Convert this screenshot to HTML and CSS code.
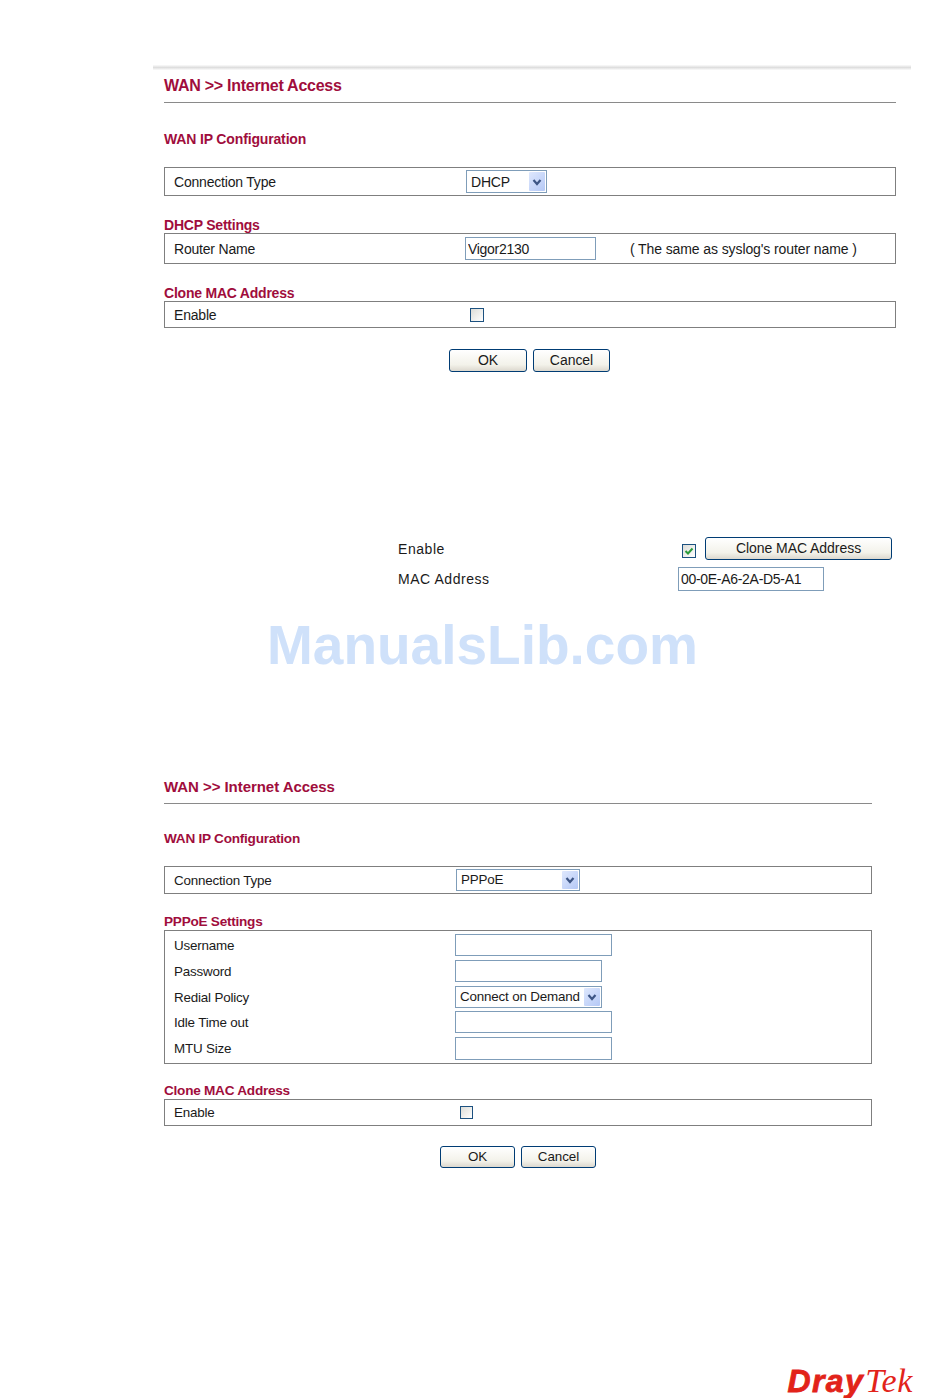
FILE: index.html
```html
<!DOCTYPE html>
<html lang="en">
<head>
<meta charset="utf-8">
<title>WAN Internet Access</title>
<link rel="stylesheet" href="styles.css">
</head>
<body>
<main class="page">
  <section class="panel panel-dhcp">
    <h1 class="title">WAN &gt;&gt; Internet Access</h1>
    <h2 class="heading heading-main">WAN IP Configuration</h2>
    <div class="box box-conn">
      <span class="label">Connection Type</span>
      <div class="select select-dhcp"><span class="select-value">DHCP</span><span class="arrow"><svg width="12" height="12" viewBox="0 0 12 12"><path d="M2.5 4 6 8l3.5-4" fill="none" stroke="#3d5585" stroke-width="2.2"/></svg></span></div>
    </div>
    <h2 class="heading heading-dhcp">DHCP Settings</h2>
    <div class="box box-router">
      <span class="label">Router Name</span>
      <input class="input input-router" type="text" value="Vigor2130">
      <span class="note">( The same as syslog's router name )</span>
    </div>
    <h2 class="heading heading-clone">Clone MAC Address</h2>
    <div class="box box-enable">
      <span class="label">Enable</span>
      <span class="check"></span>
    </div>
    <div class="actions">
      <button class="btn btn-ok" type="button">OK</button>
      <button class="btn btn-cancel" type="button">Cancel</button>
    </div>
  </section>

  <section class="clone">
    <div class="clone-row clone-row-top">
      <span class="clone-label">Enable</span>
      <span class="check check-on"><svg width="12" height="12" viewBox="0 0 12 12"><path d="M2.5 6 5 8.5 9.5 3.5" fill="none" stroke="#2a9a3a" stroke-width="2"/></svg></span>
      <button class="btn btn-clone" type="button">Clone MAC Address</button>
    </div>
    <div class="clone-row">
      <span class="clone-label">MAC Address</span>
      <input class="input input-mac" type="text" value="00-0E-A6-2A-D5-A1">
    </div>
  </section>

  <section class="panel panel-pppoe">
    <h1 class="title title-small">WAN &gt;&gt; Internet Access</h1>
    <h2 class="heading heading-main2">WAN IP Configuration</h2>
    <div class="box box-conn2">
      <span class="label">Connection Type</span>
      <div class="select select-pppoe"><span class="select-value">PPPoE</span><span class="arrow"><svg width="12" height="12" viewBox="0 0 12 12"><path d="M2.5 4 6 8l3.5-4" fill="none" stroke="#3d5585" stroke-width="2.2"/></svg></span></div>
    </div>
    <h2 class="heading heading-pppoe">PPPoE Settings</h2>
    <div class="box box-form">
      <div class="form-row"><span class="label">Username</span><input class="input input-wide" type="text"></div>
      <div class="form-row"><span class="label">Password</span><input class="input input-narrow" type="password"></div>
      <div class="form-row"><span class="label">Redial Policy</span><div class="select select-redial"><span class="select-value">Connect on Demand</span><span class="arrow"><svg width="12" height="12" viewBox="0 0 12 12"><path d="M2.5 4 6 8l3.5-4" fill="none" stroke="#3d5585" stroke-width="2.2"/></svg></span></div></div>
      <div class="form-row"><span class="label">Idle Time out</span><input class="input input-wide" type="text"></div>
      <div class="form-row"><span class="label">MTU Size</span><input class="input input-wide input-tall" type="text"></div>
    </div>
    <h2 class="heading heading-clone2">Clone MAC Address</h2>
    <div class="box box-enable2">
      <span class="label">Enable</span>
      <span class="check check-small"></span>
    </div>
    <div class="actions actions2">
      <button class="btn btn-ok2" type="button">OK</button>
      <button class="btn btn-ok2" type="button">Cancel</button>
    </div>
  </section>

  <footer class="brand"><span class="brand-dray">Dray</span><span class="brand-tek">Tek</span></footer>
  <div class="watermark">ManualsLib.com</div>
</main>
</body>
</html>
```

FILE: styles.css
```css
* { box-sizing: border-box; }
html, body { margin: 0; padding: 0; background: #fff; }
.page {
  position: relative;
  width: 950px;
  height: 1398px;
  overflow: hidden;
  font-family: "Liberation Sans", Arial, sans-serif;
  font-size: 14px;
  letter-spacing: -0.2px;
  color: #1a1a1a;
}
.panel-dhcp {
  margin: 65px 39px 0 153px;
  padding: 5px 15px 0 11px;
  height: 307px;
  background: linear-gradient(#fbfbfb, #dedede 50%, #fbfbfb) no-repeat top left / 100% 5px;
}
.title {
  margin: 0;
  height: 33px;
  padding-top: 7px;
  line-height: 18px;
  font-size: 16px;
  letter-spacing: -0.27px;
  font-weight: bold;
  color: #a00d3c;
  border-bottom: 1px solid #8a8a8a;
}
.heading {
  margin: 0;
  font-size: 14px;
  line-height: 16px;
  letter-spacing: -0.22px;
  font-weight: bold;
  color: #a00d3c;
}
.heading-main { margin-top: 28px; letter-spacing: -0.15px; }
.heading-dhcp { margin-top: 21px; }
.heading-clone { margin-top: 21px; }
.box {
  display: flex;
  align-items: center;
  border: 1px solid #7f7f7f;
  padding-left: 9px;
}
.label { line-height: 16px; }
.box .label { flex: none; width: 291px; }
.box-conn { margin-top: 20px; height: 29px; }
.box-router { margin-top: 0; height: 31px; }
.box-enable { height: 27px; }
.select {
  display: flex;
  align-items: center;
  justify-content: space-between;
  border: 1px solid #7f9db9;
  background: #fff;
  padding: 1px 1px 1px 4px;
}
.select-value { line-height: 16px; white-space: nowrap; }
.arrow {
  display: flex;
  align-items: center;
  justify-content: center;
  flex: none;
  width: 16px;
  height: 100%;
  background: linear-gradient(135deg, #dfe8fd, #b4c8f6);
  border-radius: 1px;
}
.select-dhcp { width: 81px; height: 23px; margin-left: 1px; }
.input {
  display: block;
  height: 23px;
  margin: 0;
  padding: 0 2px;
  border: 1px solid #7f9db9;
  background: #fff;
  color: #1a1a1a;
  font: 14px "Liberation Sans", Arial, sans-serif;
  letter-spacing: -0.3px;
  outline: none;
}
.input-router { width: 131px; flex: none; }
.note { margin-left: 34px; letter-spacing: -0.1px; }
.check {
  display: flex;
  align-items: center;
  justify-content: center;
  flex: none;
  width: 14px;
  height: 14px;
  border: 1px solid #1c5180;
  background: linear-gradient(135deg, #dcdcd7, #fff);
  margin-left: 5px;
}
.actions {
  display: flex;
  gap: 6px;
  margin: 21px 0 0 285px;
}
.btn {
  height: 23px;
  margin: 0;
  padding: 0 0 1px;
  border: 1px solid #003c74;
  border-radius: 3px;
  background: linear-gradient(#fff, #f3f2ea 70%, #dcd8ce);
  color: #1a1a1a;
  font: 14px "Liberation Sans", Arial, sans-serif;
  letter-spacing: -0.05px;
}
.btn-ok { width: 78px; }
.btn-cancel { width: 77px; }

.clone { margin: 165px 0 0 398px; width: 494px; }
.clone-row { display: flex; align-items: center; }
.clone-row-top { height: 23px; }
.clone-row + .clone-row { margin-top: 7px; height: 24px; }
.clone-label { width: 280px; letter-spacing: 0.55px; flex: none; }
.clone .check { margin-left: 4px; margin-top: 4px; }
.btn-clone { width: 187px; margin-left: 9px; }
.input-mac { width: 146px; height: 24px; }

.panel-pppoe { margin: 187px 78px 0 164px; font-size: 13.4px; letter-spacing: -0.18px; }
.title-small { height: 26px; padding-top: 1px; font-size: 15px; letter-spacing: -0.05px; line-height: 16px; }
.panel-pppoe .heading { font-size: 13.6px; letter-spacing: -0.25px; }
.panel-pppoe .input { font-size: 13.4px; letter-spacing: -0.18px; }
.box-conn2 .label, .box-form .label { padding-top: 2px; line-height: 16px; box-sizing: border-box; }
.heading-main2 { margin-top: 27px; }
.heading-pppoe { margin-top: 20px; }
.heading-clone2 { margin-top: 19px; }
.box-conn2 { margin-top: 19px; height: 28px; }
.box-conn2 .label, .box-enable2 .label { width: 281px; }
.select-pppoe { width: 124px; height: 22px; margin-left: 1px; }
.box-form {
  display: flex;
  flex-direction: column;
  align-items: stretch;
  gap: 3.75px;
  height: 134px;
  padding-top: 3px;
}
.form-row { display: flex; align-items: center; height: 22px; }
.box-form .label { width: 281px; }
.input-wide { width: 157px; height: 22px; }
.input-tall { height: 23px; }
.input-narrow { width: 147px; height: 22px; }
.select-redial { width: 147px; height: 22px; }
.box-enable2 { height: 27px; }
.check-small { width: 13px; height: 13px; }
.actions2 { margin: 20px 0 0 276px; }
.btn-ok2 { width: 75px; height: 22px; font-size: 13.4px; }

.brand {
  position: absolute;
  right: 37px;
  bottom: -5px;
  line-height: 32px;
  white-space: nowrap;
  letter-spacing: 0;
  color: #e2231a;
}
.brand-dray {
  font: italic bold 32px/32px "Liberation Sans", Arial, sans-serif;
  letter-spacing: 1.4px;
  -webkit-text-stroke: 0.8px #e2231a;
}
.brand-tek {
  font: italic 34px/32px "Liberation Serif", "Times New Roman", serif;
  margin-left: 1px;
  letter-spacing: 0.6px;
}
.watermark {
  position: absolute;
  left: 267px;
  top: 613px;
  font-size: 55px;
  letter-spacing: 0;
  line-height: 64px;
  font-weight: bold;
  color: #cfe1fa;
  white-space: nowrap;
}
```
